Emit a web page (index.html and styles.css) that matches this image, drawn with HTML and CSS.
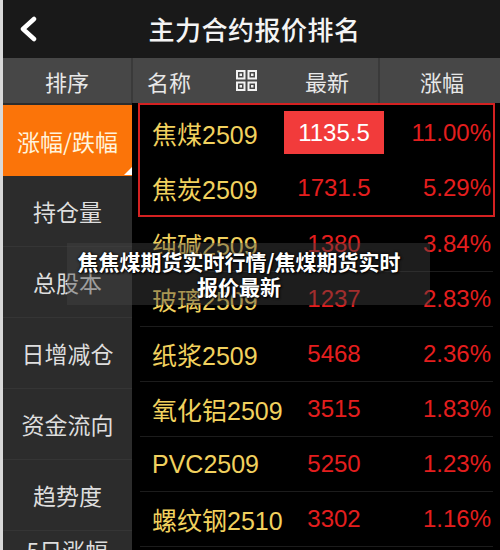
FILE: index.html
```html
<!DOCTYPE html>
<html lang="zh">
<head>
<meta charset="utf-8">
<title>主力合约报价排名</title>
<link rel="stylesheet" href="styles.css">
</head>
<body>
<div class="app">
  <header class="titlebar">
    <div class="back-wrap">
      <svg class="back" viewBox="0 0 20 26" width="20" height="26"><polyline points="16,3 5,13 16,23" fill="none" stroke="#ffffff" stroke-width="4.5" stroke-linecap="round" stroke-linejoin="round"/></svg>
    </div>
    <h1 class="title">主力合约报价排名</h1>
    <div></div>
  </header>

  <div class="colhead">
    <div class="ch-sort">排序</div>
    <div class="ch-mid">
      <span class="ch-name">名称</span>
      <svg class="ch-icon" viewBox="0 0 21 21" width="21" height="21">
        <g fill="none" stroke="#f2f2f2" stroke-width="2">
          <rect x="1" y="1" width="7.5" height="7.5"/>
          <rect x="12.5" y="1" width="7.5" height="7.5"/>
          <rect x="1" y="12.5" width="7.5" height="7.5"/>
          <rect x="12.5" y="12.5" width="7.5" height="7.5"/>
        </g>
        <g fill="#f2f2f2">
          <rect x="3.5" y="3.5" width="2.5" height="2.5"/>
          <rect x="15" y="3.5" width="2.5" height="2.5"/>
          <rect x="3.5" y="15" width="2.5" height="2.5"/>
          <rect x="15" y="15" width="2.5" height="2.5"/>
        </g>
      </svg>
      <span class="ch-last">最新</span>
    </div>
    <div class="ch-chg">涨幅</div>
  </div>

  <div class="main">
    <nav class="side">
      <div class="side-item active">涨幅/跌幅</div>
      <div class="side-item">持仓量</div>
      <div class="side-item">总股本</div>
      <div class="side-item">日增减仓</div>
      <div class="side-item">资金流向</div>
      <div class="side-item">趋势度</div>
      <div class="side-item last">5日涨幅</div>
    </nav>

    <div class="table">
      <div class="hot">
        <div class="row"><span class="name">焦煤2509</span><span class="price"><span class="price-box">1135.5</span></span><span class="chg">11.00%</span></div>
        <div class="row"><span class="name">焦炭2509</span><span class="price">1731.5</span><span class="chg">5.29%</span></div>
      </div>
      <div class="row line"><span class="name">纯碱2509</span><span class="price">1380</span><span class="chg">3.84%</span></div>
      <div class="row line"><span class="name">玻璃2509</span><span class="price">1237</span><span class="chg">2.83%</span></div>
      <div class="row line"><span class="name">纸浆2509</span><span class="price">5468</span><span class="chg">2.36%</span></div>
      <div class="row line"><span class="name">氧化铝2509</span><span class="price">3515</span><span class="chg">1.83%</span></div>
      <div class="row line"><span class="name">PVC2509</span><span class="price">5250</span><span class="chg">1.23%</span></div>
      <div class="row line"><span class="name">螺纹钢2510</span><span class="price">3302</span><span class="chg">1.16%</span></div>
    </div>
  </div>

  <div class="overlay">
    <p class="overlay-text">焦焦煤期货实时行情/焦煤期货实时<br>报价最新</p>
  </div>
</div>
</body>
</html>
```

FILE: styles.css
```css
* { box-sizing: border-box; }

html, body {
  margin: 0;
  padding: 0;
  background: #000;
}

body {
  width: 500px;
  height: 550px;
  overflow: hidden;
  font-family: "Liberation Sans", "Noto Sans CJK SC", sans-serif;
}

.app {
  position: relative;
  width: 500px;
  height: 550px;
  border-left: 3px solid #d9d9d9;
  background: #000;
  overflow: hidden;
}

/* title bar */
.titlebar {
  height: 58px;
  background: #191919;
  display: grid;
  grid-template-columns: 1fr auto 1fr;
  align-items: center;
}

.back-wrap {
  padding-left: 15px;
  display: flex;
  align-items: center;
}

.back { display: block; }

.title {
  margin: 0;
  padding-left: 6px;
  font-family: "Noto Sans CJK SC", sans-serif;
  font-size: 26px;
  font-weight: 500;
  color: #f4f4f4;
  letter-spacing: 0.5px;
  line-height: 1;
}

/* column header */
.colhead {
  height: 45px;
  background: #474747;
  display: grid;
  grid-template-columns: 130px 247px 1fr;
  font-family: "Noto Sans CJK SC", sans-serif;
  font-size: 22px;
  color: #e8e8e8;
}

.ch-sort {
  display: flex;
  align-items: center;
  justify-content: center;
  border-right: 2px solid #3a3a3a;
}

.ch-mid {
  display: flex;
  align-items: center;
  padding-left: 14px;
  border-right: 2px solid #3a3a3a;
}

.ch-name { width: 44px; }

.ch-icon {
  display: block;
  margin-left: 45px;
}

.ch-last { margin-left: 48px; }

.ch-chg {
  display: flex;
  align-items: center;
  justify-content: center;
  padding-left: 4px;
}

/* body */
.main {
  display: flex;
  height: 447px;
}

.side {
  width: 129px;
  flex: none;
  background: #2c2c2c;
  padding-top: 2px;
}

.side-item {
  position: relative;
  height: 71px;
  display: flex;
  align-items: center;
  justify-content: center;
  font-family: "Noto Sans CJK SC", sans-serif;
  font-size: 23px;
  color: #dedede;
  border-bottom: 1px solid #353535;
}

.side-item.last {
  height: 40px;
  align-items: flex-start;
  padding-top: 8px;
  line-height: 1;
  border-bottom: none;
}

.side-item.active {
  background: #fb7409;
  color: #fff3dc;
  border-bottom: none;
}

.side-item.active::after {
  content: "";
  position: absolute;
  right: 0;
  bottom: 1px;
  width: 0;
  height: 0;
  border-style: solid;
  border-width: 0 0 8px 8px;
  border-color: transparent transparent #ffffff transparent;
}

.table {
  flex: 1;
  background: #000;
}

.hot {
  margin: 0 5px 0 6px;
  border: 2px solid #d42121;
}

.row {
  height: 55px;
  display: grid;
  grid-template-columns: 144px 100px 1fr;
  align-items: center;
  font-size: 24px;
}

.row.line {
  margin: 0 7px 0 8px;
  border-bottom: 1px solid #1c1c1c;
}

.name {
  padding-left: 12px;
  font-size: 25px;
  color: #f1d15e;
  white-space: nowrap;
}

.price {
  text-align: center;
  color: #e41e1e;
}

.price-box {
  display: flex;
  align-items: center;
  justify-content: center;
  height: 43px;
  background: #f23b3b;
  color: #ffffff;
}

.chg {
  text-align: right;
  padding-right: 2px;
  color: #e41e1e;
}

/* watermark overlay */
.overlay {
  position: absolute;
  left: 64px;
  top: 243px;
  width: 363px;
  height: 62px;
  background: rgba(70, 70, 70, 0.42);
  display: flex;
  align-items: center;
  justify-content: center;
  padding-right: 19px;
}

.overlay-text {
  margin: 0;
  text-align: center;
  font-family: "Noto Sans CJK SC", sans-serif;
  font-size: 21px;
  font-weight: 700;
  line-height: 25px;
  color: #ffffff;
  white-space: nowrap;
  text-shadow: 0 0 3px #000, 1px 1px 2px #000;
}
```
